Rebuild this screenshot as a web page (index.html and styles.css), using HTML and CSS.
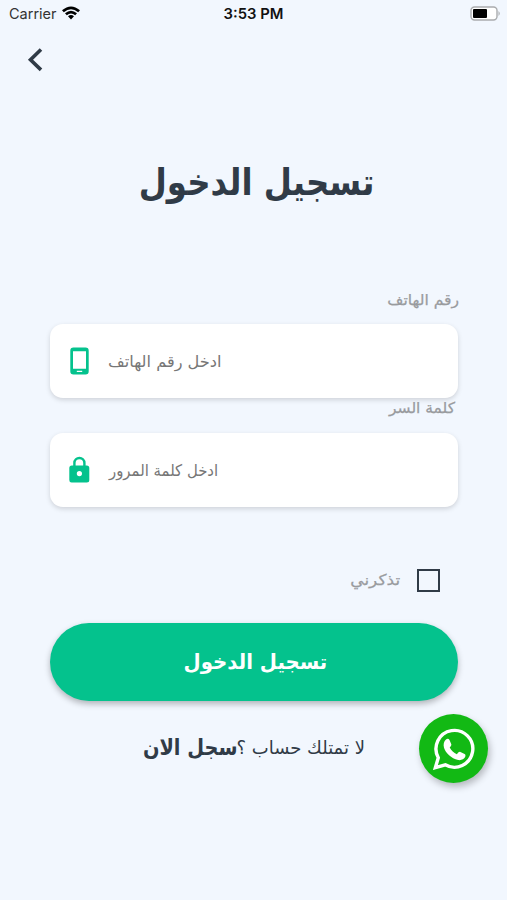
FILE: index.html
```html
<!DOCTYPE html>
<html lang="ar">
<head>
<meta charset="utf-8">
<meta name="viewport" content="width=device-width, initial-scale=1">
<title>تسجيل الدخول</title>
<link rel="stylesheet" href="styles.css">
</head>
<body>
<div class="screen">
  <header class="status">
    <div class="network"><span class="carrier">Carrier</span>
      <svg class="wifi" viewBox="0 0 18 14" width="18" height="14"><path d="M0 4.200Q9-3.400 18 4.200L16.200 6.200Q9 .2 1.800 6.200ZM3 7.200Q9 2.200 15 7.200L13.200 9.200Q9 5.800 4.800 9.200ZM6 10.200Q9 7.900 12 10.200L9 13.500Z"/></svg>
    </div>
    <div class="clock">3:53 PM</div>
    <svg class="battery" viewBox="0 0 31 16" width="31" height="16"><rect x="1" y="1" width="26" height="13" rx="3.5" fill="#fff" stroke="#aaacae" stroke-width="1.4"/><rect x="3" y="3" width="14" height="9" rx="1" fill="#000"/><path d="M28.500 5Q31 7.500 28.500 10Z" fill="#aaacae"/></svg>
  </header>
  <button class="back" aria-label="رجوع"><svg viewBox="0 0 18 26" width="18" height="26"><path d="M15 2.500 4.500 12.700l10.500 10.200"/></svg></button>
  <h1 class="title" dir="rtl"><span>تسجيل الدخول</span></h1>
  <form class="form">
    <label class="label label-phone" dir="rtl"><span>رقم الهاتف</span></label>
    <div class="field">
      <svg class="icon" viewBox="0 0 30 30" width="30" height="30"><path fill-rule="evenodd" d="M8.500 1.500h12a3.200 3.200 0 0 1 3.200 3.200v20.600a3.200 3.200 0 0 1-3.200 3.200h-12a3.200 3.200 0 0 1-3.200-3.200V4.700a3.200 3.200 0 0 1 3.200-3.200ZM8 5.200v17.600h13V5.200ZM11.800 24.800v1.300h5.400v-1.300Z"/></svg>
      <span class="hint hint-phone" dir="rtl">ادخل رقم الهاتف</span>
    </div>
    <label class="label label-pass" dir="rtl"><span>كلمة السر</span></label>
    <div class="field">
      <svg class="icon" viewBox="0 0 30 30" width="30" height="30"><path fill-rule="evenodd" d="M8.200 10.500V8a6.200 6.200 0 0 1 12.400 0v2.500h1.200a2.500 2.500 0 0 1 2.500 2.500V25a2.500 2.500 0 0 1-2.500 2.500H7A2.500 2.500 0 0 1 4.300 25V13A2.500 2.500 0 0 1 6.800 10.500ZM10.600 10.500h7.600V8a3.800 3.800 0 0 0-7.600 0ZM14.400 16a2.600 2.600 0 1 0 0 5.200a2.600 2.600 0 0 0 0-5.200Z"/></svg>
      <span class="hint hint-pass" dir="rtl">ادخل كلمة المرور</span>
    </div>
    <label class="remember" dir="rtl"><span class="box"></span><span class="remember-text">تذكرني</span></label>
    <button type="button" class="submit" dir="rtl"><span>تسجيل الدخول</span></button>
  </form>
  <footer class="signup" dir="rtl"><span class="ask">لا تمتلك حساب ؟</span><span class="join">سجل الان</span></footer>
  <a class="whatsapp" aria-label="WhatsApp"><svg viewBox="0 0 42 42" width="42" height="42"><path d="M2.400 39.600 5.300 29.700A18.400 18.400 0 1 1 12.300 36.800Z" fill="none" stroke="#fff" stroke-width="3.400"/><path d="M13 11.500c1.200-1 2.900-.8 3.500.5l1.700 4c.5 1.100-.1 2-1.500 3.600c1.800 3.200 4 5.200 7.200 6.600c1.700-2.200 2.500-2.800 3.500-2.300l4.200 2c1.200.6 1 2 .5 3.200c-1 2.300-4.200 3.500-6.900 2.900c-7-1.600-12.500-7-14.200-12.300c-.9-3.300-.1-6.500 2-8.200Z" fill="#fff"/></svg></a>
</div>
</body>
</html>
```
FILE: styles.css
```css
* { box-sizing: border-box; }
body { margin: 0; background: #f2f7fe; font-family: "DejaVu Sans", sans-serif; color: #303b47; }
button { border: 0; background: none; padding: 0; font: inherit; }
svg { display: block; flex: none; }
.screen { position: relative; width: 507px; height: 900px; display: flex; flex-direction: column; overflow: hidden; }
.status { display: grid; grid-template-columns: 1fr auto 1fr; align-items: center; height: 27px; padding: 0 6px 0 9px; font-family: Inter, sans-serif; color: #111; }
.network { display: flex; align-items: center; gap: 5px; }
.wifi { margin-top: -2px; }
.carrier { font-size: 14.500px; color: #333; }
.clock { font-size: 14.800px; font-weight: 600; margin-right: 3px; }
.battery { justify-self: end; }
.back { width: 18px; height: 26px; margin: 20px 0 0 26px; }
.back path { fill: none; stroke: #303b47; stroke-width: 3.600; }
.title { margin: 77px 0 0; padding-left: 7px; height: 70px; line-height: 66px; font-size: 37px; font-weight: 700; text-align: center; }
.title span, .label span, .submit span, .hint, .remember-text, .ask, .join { display: inline-block; white-space: nowrap; }
.title span { transform: scaleX(.876); }
.form { margin: 67px 49px 0 50px; display: flex; flex-direction: column; }
.label { color: #999b9e; font-size: 15px; -webkit-text-stroke: .25px; }
.label span { transform-origin: right; }
.label-phone { height: 37px; line-height: 26px; }
.label-phone span { transform: translateX(1px) scaleX(1.040); }
.label-pass { height: 35px; padding-right: 4px; line-height: 20px; }
.label-pass span { transform: translateX(1px) scaleX(1.030); }
.field { display: flex; align-items: center; height: 74px; padding-left: 15px; gap: 13px; border-radius: 13px; background: #fff; box-shadow: 0 2px 5px rgba(0,0,0,.15); }
.icon { fill: #04c28d; }
.hint { font-size: 16px; color: #777; transform-origin: left; }
.hint-phone { transform: scaleX(1.010); }
.hint-pass { transform: translateX(1px) scaleX(.930); }
.remember { display: flex; align-items: center; height: 24px; margin: 61px 0 0; padding-right: 18px; gap: 17px; color: #999b9e; font-size: 15px; }
.remember-text { transform: scaleX(1.130); transform-origin: right; -webkit-text-stroke: .25px; }
.box { width: 23px; height: 23px; border: 2.500px solid #303b47; }
.submit { height: 78px; margin-top: 31px; border-radius: 39px; background: #04c28d; color: #fff; font-weight: 700; font-size: 21px; box-shadow: 0 3px 6px rgba(0,0,0,.28); }
.submit span { transform: translateX(1px) scaleX(.940); }
.signup { display: flex; align-items: center; height: 40px; margin-top: 26px; padding-right: 142px; font-size: 18px; }
.join { font-weight: 700; font-size: 22px; transform: translateX(1px) scaleX(.880); transform-origin: right; }
.whatsapp { position: absolute; left: 419px; top: 714px; width: 69px; height: 69px; display: grid; place-items: center; border-radius: 50%; background: #12b914; box-shadow: 2px 4px 7px rgba(0,0,0,.25); }
```
